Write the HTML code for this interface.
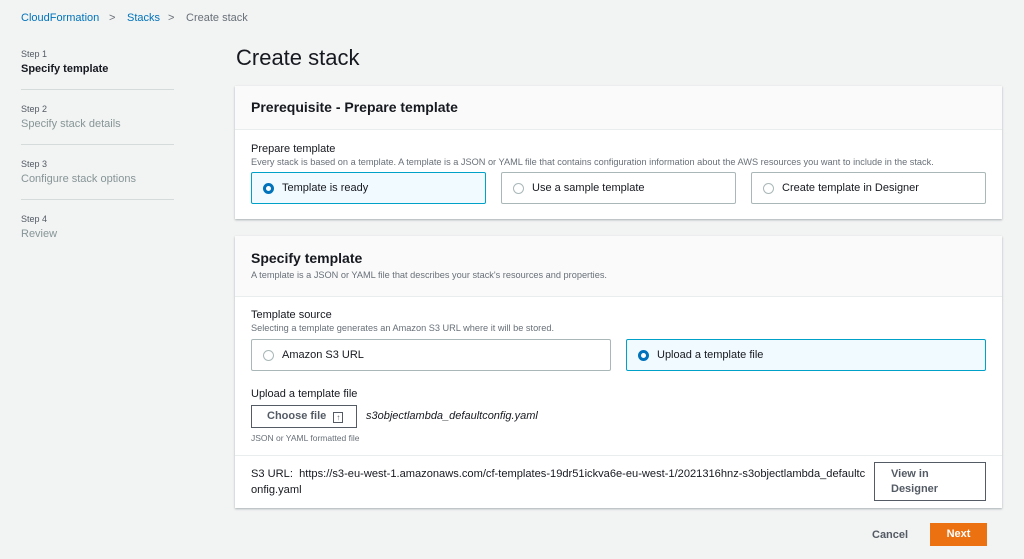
<!DOCTYPE html>
<html><head><meta charset="utf-8"><style>
*{box-sizing:border-box;margin:0;padding:0}
body{width:1024px;height:559px;background:#f2f3f3;font-family:"Liberation Sans",sans-serif;color:#16191f;position:relative;overflow:hidden}
.a{position:absolute;white-space:nowrap}
.bc{top:12px;font-size:11px}
.blue{color:#0073bb}
.gray{color:#687078}
.step{left:21px;font-size:9px;color:#545b64}
.stl{left:21px;font-size:11px;color:#879596}
.hr{position:absolute;left:21px;width:153px;height:1px;background:#d5dbdb}
.card{position:absolute;left:235px;width:767px;background:#fff;box-shadow:0 1px 2px rgba(0,28,36,.3)}
.hd{position:absolute;left:0;right:0;background:#fafafa;border-bottom:1px solid #eaeded}
.h2{font-size:14px;font-weight:bold}
.lbl{font-size:11px}
.desc{font-size:9.2px;color:#687078}
.tile{position:absolute;height:32px;border:1px solid #aab7b8;border-radius:2px;font-size:11px;padding-left:30px;line-height:30px}
.tile.sel{border-color:#00a1c9;background:#f1faff}
.rad{position:absolute;left:11px;top:10px;width:11px;height:11px;border:1px solid #aab7b8;border-radius:50%;background:#fff}
.sel .rad{border:3px solid #0073bb}
.btn{position:absolute;border:1px solid #545b64;font-size:11px;font-weight:bold;color:#545b64;background:#fff}
</style></head><body>
<div class="a bc blue" style="left:21px">CloudFormation</div>
<div class="a bc gray" style="left:109px">&gt;</div>
<div class="a bc blue" style="left:127px">Stacks</div>
<div class="a bc gray" style="left:168px">&gt;</div>
<div class="a bc gray" style="left:186px">Create stack</div>

<div class="a step" style="top:49px">Step 1</div>
<div class="a" style="left:21px;top:63px;font-size:11px;font-weight:bold">Specify template</div>
<div class="hr" style="top:89px"></div>
<div class="a step" style="top:104px">Step 2</div>
<div class="a stl" style="top:118px">Specify stack details</div>
<div class="hr" style="top:144px"></div>
<div class="a step" style="top:159px">Step 3</div>
<div class="a stl" style="top:173px">Configure stack options</div>
<div class="hr" style="top:199px"></div>
<div class="a step" style="top:214px">Step 4</div>
<div class="a stl" style="top:228px">Review</div>

<div class="a" style="left:236px;top:45px;font-size:22px">Create stack</div>

<div class="card" style="top:86px;height:133px">
 <div class="hd" style="top:0;height:44px"></div>
 <div class="a h2" style="left:16px;top:13px">Prerequisite - Prepare template</div>
 <div class="a lbl" style="left:16px;top:57px">Prepare template</div>
 <div class="a desc" style="left:16px;top:71px">Every stack is based on a template. A template is a JSON or YAML file that contains configuration information about the AWS resources you want to include in the stack.</div>
 <div class="tile sel" style="left:16px;top:86px;width:235px"><span class="rad"></span>Template is ready</div>
 <div class="tile" style="left:266px;top:86px;width:235px"><span class="rad"></span>Use a sample template</div>
 <div class="tile" style="left:516px;top:86px;width:235px"><span class="rad"></span>Create template in Designer</div>
</div>

<div class="card" style="top:236px;height:272px">
 <div class="hd" style="top:0;height:61px"></div>
 <div class="a h2" style="left:16px;top:14px">Specify template</div>
 <div class="a desc" style="left:16px;top:34px">A template is a JSON or YAML file that describes your stack's resources and properties.</div>
 <div class="a lbl" style="left:16px;top:73px">Template source</div>
 <div class="a desc" style="left:16px;top:87px">Selecting a template generates an Amazon S3 URL where it will be stored.</div>
 <div class="tile" style="left:16px;top:103px;width:360px"><span class="rad"></span>Amazon S3 URL</div>
 <div class="tile sel" style="left:391px;top:103px;width:360px"><span class="rad"></span>Upload a template file</div>
 <div class="a lbl" style="left:16px;top:152px">Upload a template file</div>
 <div class="btn" style="left:16px;top:169px;width:106px;height:23px;line-height:21px;padding-left:15px">Choose file <span style="display:inline-block;width:10px;height:11px;border:1px solid #545b64;font-size:8px;line-height:9px;text-align:center;vertical-align:-1px;margin-left:4px">↑</span></div>
 <div class="a" style="left:131px;top:174px;font-size:11px;font-style:italic">s3objectlambda_defaultconfig.yaml</div>
 <div class="a desc" style="left:16px;top:197px;font-size:8.5px">JSON or YAML formatted file</div>
 <div style="position:absolute;left:0;right:0;top:219px;height:1px;background:#eaeded"></div>
 <div class="a" style="left:16px;top:230px;font-size:11.1px;line-height:16px">S3 URL:&nbsp; https://s3-eu-west-1.amazonaws.com/cf-templates-19dr51ickva6e-eu-west-1/2021316hnz-s3objectlambda_defaultc<br>onfig.yaml</div>
 <div class="btn" style="left:639px;top:226px;width:112px;height:39px;padding:4px 0 0 16px;line-height:15px">View in<br>Designer</div>
</div>

<div class="a" style="left:872px;top:529px;font-size:11px;font-weight:bold;color:#545b64">Cancel</div>
<div class="a" style="left:930px;top:523px;width:57px;height:23px;background:#ec7211;color:#fff;font-size:11px;font-weight:bold;text-align:center;line-height:23px">Next</div>
</body></html>
